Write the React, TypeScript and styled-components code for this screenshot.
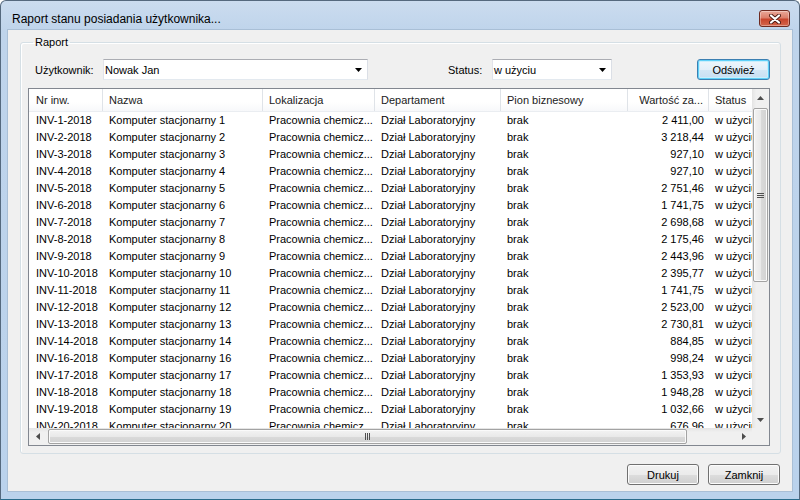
import React from 'react';
import styled, { createGlobalStyle } from 'styled-components';

const GlobalStyle = createGlobalStyle`
    html, body {
        margin: 0;
        padding: 0;
        background: #ffffff;
    }

    body {
        font-family: "Liberation Sans", Arial, sans-serif;
        font-size: 11px;
        color: #000000;
    }

    * {
        box-sizing: border-box;
    }
`;

type Column = {
    title: string,
    right?: boolean,
}

type Item = {
    nr: number,
    value: string,
}

const COLUMNS: Column[] = [
    { title: 'Nr inw.' },
    { title: 'Nazwa' },
    { title: 'Lokalizacja' },
    { title: 'Departament' },
    { title: 'Pion biznesowy' },
    { title: 'Wartość za...', right: true },
    { title: 'Status' },
];

const GRID = '74px 160px 112px 126px 127px 81px 70px';

const ITEMS: Item[] = [
    { nr: 1, value: '2 411,00' },
    { nr: 2, value: '3 218,44' },
    { nr: 3, value: '927,10' },
    { nr: 4, value: '927,10' },
    { nr: 5, value: '2 751,46' },
    { nr: 6, value: '1 741,75' },
    { nr: 7, value: '2 698,68' },
    { nr: 8, value: '2 175,46' },
    { nr: 9, value: '2 443,96' },
    { nr: 10, value: '2 395,77' },
    { nr: 11, value: '1 741,75' },
    { nr: 12, value: '2 523,00' },
    { nr: 13, value: '2 730,81' },
    { nr: 14, value: '884,85' },
    { nr: 16, value: '998,24' },
    { nr: 17, value: '1 353,93' },
    { nr: 18, value: '1 948,28' },
    { nr: 19, value: '1 032,66' },
    { nr: 20, value: '676,96' },
];

const Triangle = ({ dir }: { dir: 'up' | 'down' | 'left' | 'right' }) => {
    const points = {
        up: '0,4 7,4 3.5,0',
        down: '0,0 7,0 3.5,4',
        left: '4,0 4,7 0,3.5',
        right: '0,0 0,7 4,3.5',
    }[dir];
    const vertical = dir === 'up' || dir === 'down';

    return (
        <svg width={vertical ? 7 : 4} height={vertical ? 4 : 7}>
            <polygon points={points} fill="#4d4d4d" />
        </svg>
    );
}

const Combo = ({ value, width }: { value: string, width: number }) => (
    <ComboBox $width={width}>
        <ComboText>{value}</ComboText>
        <svg width="7" height="4">
            <polygon points="0,0 7,0 3.5,4" fill="#000" />
        </svg>
    </ComboBox>
);

export default function App() {
    return (
        <>
            <GlobalStyle />
            <Window>
                <TitleBar>
                    <Title>Raport stanu posiadania użytkownika...</Title>
                    <CloseButton>
                        <svg width="12" height="10">
                            <path d="M2 1.5 L10 8.5 M10 1.5 L2 8.5" stroke="#4b1a13" strokeWidth="4" strokeLinecap="round" />
                            <path d="M2 1.5 L10 8.5 M10 1.5 L2 8.5" stroke="#ffffff" strokeWidth="2.2" strokeLinecap="round" />
                        </svg>
                    </CloseButton>
                </TitleBar>

                <Client>
                    <Group>
                        <Legend>Raport</Legend>

                        <FilterRow>
                            <FieldLabel $width={75}>Użytkownik:</FieldLabel>
                            <Combo value="Nowak Jan" width={265} />
                            <StatusLabel>Status:</StatusLabel>
                            <Combo value="w użyciu" width={120} />
                            <Button $default $width={73}>Odśwież</Button>
                        </FilterRow>

                        <ListView>
                            <Viewport>
                                <HeaderRow>
                                    {COLUMNS.map((column) => (
                                        <HeaderCell key={column.title} $right={column.right}>{column.title}</HeaderCell>
                                    ))}
                                </HeaderRow>
                                {ITEMS.map((item) => (
                                    <Row key={item.nr}>
                                        <Cell>INV-{item.nr}-2018</Cell>
                                        <Cell>Komputer stacjonarny {item.nr}</Cell>
                                        <Cell>Pracownia chemicz...</Cell>
                                        <Cell>Dział Laboratoryjny</Cell>
                                        <Cell>brak</Cell>
                                        <Cell $right>{item.value.replace(' ', '\u00a0')}</Cell>
                                        <Cell>w użyciu</Cell>
                                    </Row>
                                ))}
                            </Viewport>

                            <VScroll>
                                <ArrowCell><Triangle dir="up" /></ArrowCell>
                                <VThumb>
                                    <svg width="7" height="5">
                                        <path d="M0 0.5h7M0 2.5h7M0 4.5h7" stroke="#4f4f4f" strokeWidth="1" />
                                    </svg>
                                </VThumb>
                                <Track />
                                <ArrowCell><Triangle dir="down" /></ArrowCell>
                            </VScroll>

                            <HScroll>
                                <ArrowCell><Triangle dir="left" /></ArrowCell>
                                <HThumb>
                                    <svg width="5" height="7">
                                        <path d="M0.5 0v7M2.5 0v7M4.5 0v7" stroke="#4f4f4f" strokeWidth="1" />
                                    </svg>
                                </HThumb>
                                <Track />
                                <ArrowCell><Triangle dir="right" /></ArrowCell>
                            </HScroll>

                            <Corner />
                        </ListView>
                    </Group>

                    <ButtonBar>
                        <Button $width={72}>Drukuj</Button>
                        <Button $width={72}>Zamknij</Button>
                    </ButtonBar>
                </Client>
            </Window>
        </>
    );
}

const Window = styled.div`
    width: 800px;
    height: 500px;

    display: flex;
    flex-direction: column;

    border: 1px solid #55697e;
    border-bottom-color: #2a6c8c;
    border-radius: 6px 6px 0 0;
    background: linear-gradient(to bottom, #cbdcef 0, #bfd4eb 30px, #bad2ec 100%);
`;

const TitleBar = styled.div`
    height: 29px;
    flex-shrink: 0;

    display: flex;
    align-items: flex-start;
    justify-content: space-between;

    padding: 0 9px 0 11px;
`;

const Title = styled.div`
    margin-top: 11px;

    font-family: "Liberation Sans", Arial, sans-serif;
    font-size: 12px;
    line-height: 15px;
    color: #000000;
`;

const CloseButton = styled.div`
    width: 31px;
    height: 17px;
    margin-top: 9px;

    display: flex;
    align-items: center;
    justify-content: center;

    border: 1px solid #6e2a20;
    border-radius: 3px;
    background: linear-gradient(to bottom, #e9a899 0%, #dc7f6b 45%, #c8452d 55%, #d4664c 100%);
    box-shadow: inset 0 0 0 1px rgba(255, 255, 255, 0.35);
`;

const Client = styled.div`
    flex: 1;
    min-height: 0;

    display: flex;
    flex-direction: column;

    margin: 0 7px 8px;
    background: #f0f0f0;
    box-shadow: 0 0 0 1px #a9bfd6;
`;

const Group = styled.fieldset`
    flex: 1;
    min-height: 0;
    min-width: 0;

    display: flex;
    flex-direction: column;

    margin: 6px 11px 0 12px;
    padding: 10px 10px 7px 7px;

    border: 1px solid #d5dfe5;
    border-radius: 3px;
    box-shadow: inset 1px 1px 0 #ffffff;
`;

const Legend = styled.legend`
    margin-left: 5px;
    padding: 0 2px;

    font-size: 11px;
    line-height: 13px;
    color: #000000;
`;

const FilterRow = styled.div`
    height: 21px;
    flex-shrink: 0;

    display: flex;
    align-items: center;

    margin-bottom: 8px;
`;

const FieldLabel = styled.div<{ $width: number }>`
    width: ${(p) => p.$width}px;
    padding-left: 7px;
    white-space: nowrap;
`;

const StatusLabel = styled.div`
    width: 44px;
    margin-left: 80px;
    white-space: nowrap;
`;

const ComboBox = styled.div<{ $width: number }>`
    width: ${(p) => p.$width}px;
    height: 21px;

    display: flex;
    align-items: center;
    justify-content: space-between;

    padding: 0 5px 0 1px;

    background: #ffffff;
    border: 1px solid #abadb3;
    border-color: #abadb3 #dbdfe6 #e3e9ef #e2e3ea;
`;

const ComboText = styled.span`
    white-space: nowrap;
    font-size: 11px;
`;

const Button = styled.div<{ $width: number, $default?: boolean }>`
    width: ${(p) => p.$width}px;
    height: 21px;
    margin-left: ${(p) => (p.$default ? 'auto' : '0')};

    display: flex;
    align-items: center;
    justify-content: center;

    border: 1px solid ${(p) => (p.$default ? '#3c7fb1' : '#707070')};
    border-radius: 3px;
    background: ${(p) => (p.$default
        ? 'linear-gradient(to bottom, #eef6fc 0%, #e2eff9 50%, #d3e7f6 51%, #c6def2 100%)'
        : 'linear-gradient(to bottom, #f2f2f2 0%, #ebebeb 50%, #dddddd 51%, #cfcfcf 100%)')};
    box-shadow: ${(p) => (p.$default
        ? 'inset 0 0 0 1px #5fd0f8, inset 0 0 0 2px #c9eefc'
        : 'inset 0 0 0 1px #fcfcfc')};

    font-size: 11px;
    color: #000000;
`;

const ButtonBar = styled.div`
    flex-shrink: 0;

    display: flex;
    justify-content: flex-end;
    gap: 9px;

    padding: 10px 12px 6px 0;
`;

const ListView = styled.div`
    flex: 1;
    min-height: 0;

    display: grid;
    grid-template-columns: 1fr 17px;
    grid-template-rows: 1fr 17px;

    border: 1px solid #828790;
    background: #ffffff;
`;

const Viewport = styled.div`
    min-width: 0;
    min-height: 0;
    overflow: hidden;
`;

const HeaderRow = styled.div`
    height: 23px;

    display: grid;
    grid-template-columns: ${GRID};

    background: linear-gradient(to bottom, #ffffff 0%, #ffffff 60%, #f7f8fa 100%);
    border-bottom: 1px solid #eaedf1;
`;

const HeaderCell = styled.div<{ $right?: boolean }>`
    display: flex;
    align-items: center;
    justify-content: ${(p) => (p.$right ? 'flex-end' : 'flex-start')};

    padding: 0 5px 0 6px;
    border-right: 1px solid #dfe3e8;

    white-space: nowrap;
    overflow: hidden;
    color: #1b1b1b;

    &:first-child {
        padding-left: 7px;
    }
`;

const Row = styled.div`
    height: 17px;

    display: grid;
    grid-template-columns: ${GRID};
`;

const Cell = styled.div<{ $right?: boolean }>`
    padding: 0 5px 0 6px;

    line-height: 17px;
    text-align: ${(p) => (p.$right ? 'right' : 'left')};
    white-space: nowrap;
    overflow: hidden;

    &:first-child {
        padding-left: 7px;
    }
`;

const VScroll = styled.div`
    display: flex;
    flex-direction: column;

    background: linear-gradient(to right, #e4e4e4 0%, #f0f0f0 25%, #f0f0f0 100%);
`;

const HScroll = styled.div`
    display: flex;

    background: linear-gradient(to bottom, #e4e4e4 0%, #f0f0f0 25%, #f0f0f0 100%);
`;

const ArrowCell = styled.div`
    width: 17px;
    height: 17px;
    flex-shrink: 0;

    display: flex;
    align-items: center;
    justify-content: center;
`;

const Track = styled.div`
    flex: 1;
`;

const VThumb = styled.div`
    height: 174px;
    margin: 2px 1px 0;

    display: flex;
    align-items: center;
    justify-content: center;

    border: 1px solid #a3a3a3;
    border-radius: 2px;
    background: linear-gradient(to right, #f3f3f3 0%, #e9e9e9 50%, #dadada 51%, #d2d2d2 100%);
    box-shadow: inset 0 0 0 1px #fafafa;
`;

const HThumb = styled.div`
    width: 639px;
    margin: 1px 0 1px 2px;

    display: flex;
    align-items: center;
    justify-content: center;

    border: 1px solid #a3a3a3;
    border-radius: 2px;
    background: linear-gradient(to bottom, #f3f3f3 0%, #e9e9e9 50%, #dadada 51%, #d2d2d2 100%);
    box-shadow: inset 0 0 0 1px #fafafa;
`;

const Corner = styled.div`
    background: #f0f0f0;
`;
